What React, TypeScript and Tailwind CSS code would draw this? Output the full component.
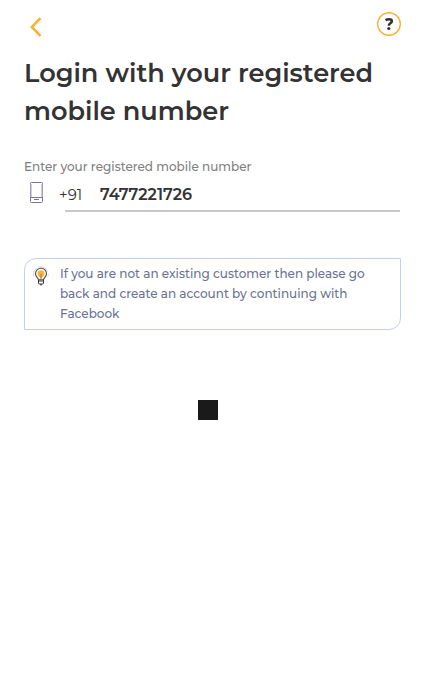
import React from "react";

function BackIcon() {
  return (
    <svg width="14" height="22" viewBox="0 0 14 22" fill="none">
      <path d="M11.5 2.2 2.8 11l8.7 8.8" stroke="#f8b132" strokeWidth="2.5" />
    </svg>
  );
}

function PhoneIcon() {
  return (
    <svg width="13" height="21" viewBox="0 0 13 21" fill="none" strokeWidth="1">
      <rect x="0.5" y="0.5" width="12" height="20" rx="1" stroke="#747796" />
      <path d="M0.5 2v13" stroke="#8ba5d4" />
      <path d="M12.5 2v13" stroke="#8ba5d4" />
      <path d="M1.5 2v13M11.5 2v13" stroke="#e3b3b4" strokeWidth="0.8" />
      <path d="M1 15.5h11M4 17.5h5" stroke="#747796" />
    </svg>
  );
}

function BulbIcon() {
  return (
    <svg width="16" height="20" viewBox="0 0 16 20" fill="none">
      <path d="M.8 10.5A7.4 7.4 0 0 1 3.2 2.4M5.5 1.2A7.4 7.4 0 0 1 14.8 5.5M15.3 8.3l-.3 2" stroke="#c9c9c9" strokeWidth="0.8" />
      <path d="M5.5 13.8c0-1.5-3-2.7-3-6a5.5 5.5 0 0 1 11 0c0 3.3-3 4.5-3 6Z" fill="#fff" stroke="#4a4a4a" strokeWidth="1.1" />
      <path d="M6.8 12.2V11A3.5 3.5 0 1 1 9.2 11v1.2Z" fill="#f8b13c" />
      <path d="M8 8v5" stroke="#9b7a45" strokeWidth="0.8" />
      <path d="M5.5 14v3q0 1 1 1h3q1 0 1-1V14M5.5 15h5M7 18.8h2" stroke="#333" />
    </svg>
  );
}

export default function App() {
  return (
    <main className="h-[700px] w-[425px] bg-white px-6 font-[Montserrat,Inter,sans-serif] text-[#333]">
      <header className="flex h-[54px] justify-between pt-3">
        <button className="ml-[5px] mt-1 h-[22px]" aria-label="Back"><BackIcon /></button>
        <button className="flex h-6 w-6 items-center justify-center" aria-label="Help">
          <svg width="24" height="24" viewBox="0 0 24 24" fill="none">
            <circle cx="12" cy="12" r="11.3" stroke="#f8b132" strokeWidth="1.4" />
            <path d="M8.5 8.2Q10.3 7.2 12 7.2c2 0 2.8.8 2.8 2 0 2.2-3 2-3 4.6" stroke="#333" strokeWidth="2.6" />
            <circle cx="11.8" cy="16.5" r="1.6" fill="#333" />
          </svg>
        </button>
      </header>
      <h1 className="whitespace-nowrap text-[25.6px] font-semibold leading-[38px]">
        <span className="block">Login with your registered</span>
        <span className="block">mobile number</span>
      </h1>
      <section className="mt-[27px]">
        <p className="whitespace-nowrap text-[12px] font-medium leading-5 text-[#808080]">Enter your registered mobile number</p>
        <div className="flex h-[35px]">
          <div className="ml-[6px] mt-[5px] w-[29px]"><PhoneIcon /></div>
          <span className="mt-2 w-[41px] text-[15px] leading-5">+91</span>
          <span className="mt-2 text-base font-semibold leading-5">7477221726</span>
        </div>
        <div className="-mt-[2px] ml-[41px] h-[2px] w-[335px] bg-[#c8c8c8]" />
      </section>
      <aside className="mt-[46px] flex h-[72px] w-[377px] rounded-br-[12px] rounded-tl-[12px] border border-[#c5cfeb] pl-2 pt-[5px] text-[12px] font-medium leading-5 text-[#6b7390]">
        <div className="mt-[2px] w-[27px]"><BulbIcon /></div>
        <p className="whitespace-nowrap">
          <span className="block">If you are not an existing customer then please go</span>
          <span className="block">back and create an account by continuing with</span>
          <span className="block">Facebook</span>
        </p>
      </aside>
      <div className="ml-[174px] mt-[70px] h-5 w-5 bg-[#1a1a1a]" />
    </main>
  );
}
